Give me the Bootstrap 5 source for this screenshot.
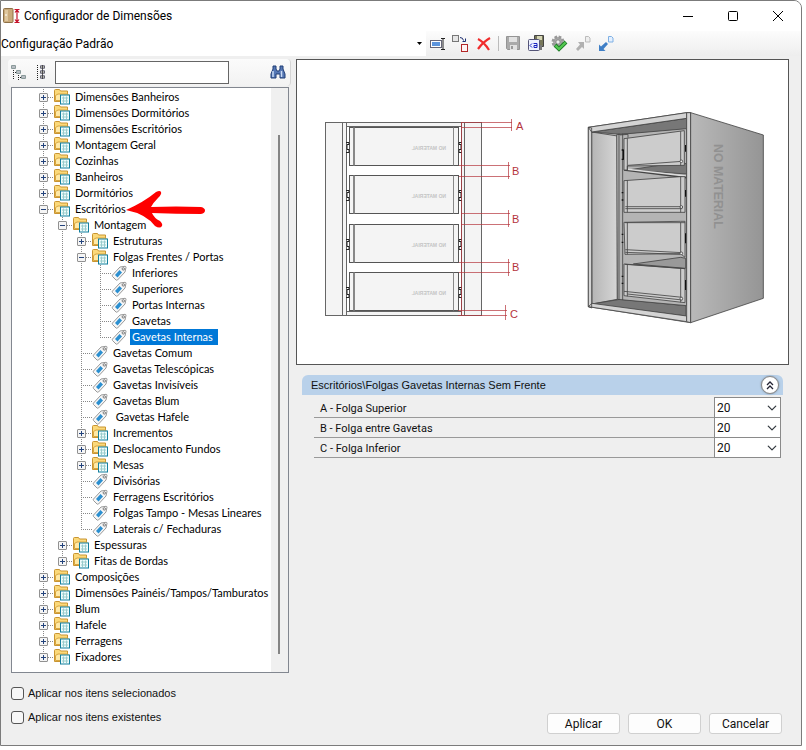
<!DOCTYPE html>
<html lang="pt-BR">
<head>
<meta charset="utf-8">
<meta name="viewport" content="width=device-width, initial-scale=1">
<title>Configurador de Dimensões</title>
<link href="https://cdn.jsdelivr.net/npm/bootstrap@5.3.0/dist/css/bootstrap.min.css" rel="stylesheet">
<style>
body{font:11px/16px "Liberation Sans",Arial,sans-serif;color:#111;background:#fff}
svg{display:block;flex:none}
button{color:inherit}
.window{min-height:calc(100vh - 4px);margin:0 4px 4px 0;border:1px solid #7b7b7b;border-top-right-radius:8px;background:#efefef;overflow:hidden}
.titlebar{height:30px;background:#fff;color:#000;font:12px/16px Roboto,sans-serif;padding:0 11px 0 2px}
.titlebar .controls{gap:20px}
.titlebar button{width:25px;height:24px}
.plain-btn{border:0;background:none;padding:0;display:flex;align-items:center;justify-content:center}
.commands{height:25px;background:#fff}
.profile{flex:0 0 425px;border:0;padding:0 14px 0 0;appearance:none;color:#000;font:12px/16px Roboto,sans-serif;background:#fff url("data:image/svg+xml,%3Csvg xmlns='http://www.w3.org/2000/svg' width='5' height='3'%3E%3Cpath d='M0 0h5L2.5 3z'/%3E%3C/svg%3E") no-repeat right 4px center}
.tools{background:linear-gradient(#fcfcfc,#eee);padding-left:3px;gap:6px}
.tools .plain-btn{width:17px;height:18px}
.sep{width:1px;height:15px;background:#bbb}
.content-area{padding-top:3px}
.side{width:283px;margin-left:7px}
.main-area{margin-left:5px;min-width:0}
.finder{height:27px;gap:9px;background:linear-gradient(#fbfbfb,#f2f2f2);border-right:1px solid #d5d5d5;border-radius:4px;padding:0 4px 0 3px}
.finder input{width:174px;height:23px;border:1px solid #666;background:#fff;padding:0 4px}
.treebox{height:586px;margin:1px 2px 0 3px;border:1px solid #828790;background:#fff;font-family:Lato,sans-serif;color:#000}
.tree{padding:1px 0 0 27px;min-width:0;flex:1;overflow:hidden}
.tree ul{list-style:none;margin:0;padding:0}
.tree ul ul{margin-left:19px}
.tree li{background:repeating-linear-gradient(#888 0 1px,transparent 1px 2px) 4px 0/1px 100% no-repeat}
.tree li:last-child{background-size:1px 8px}
.node{display:flex;align-items:center;height:16px;white-space:nowrap}
.node button{width:9px;height:9px;border:1px solid #919191;border-radius:1px;background:linear-gradient(#23437c,#23437c) center/5px 1px no-repeat,linear-gradient(#23437c,#23437c) center/1px 5px no-repeat,#f5f5f5;padding:0;flex:none}
.node button[aria-expanded=true]{background:linear-gradient(#23437c,#23437c) center/5px 1px no-repeat,#f5f5f5}
.node i{width:6px;height:1px;flex:none;background:repeating-linear-gradient(90deg,#888 0 1px,transparent 1px 2px)}
.node.leaf i{width:11px;margin-left:4px}
.node span{margin-left:3px;padding:0 5px 0 2px}
.tree .picked span{background:#0078d7;color:#fff}
.scroller{width:17px;flex:none;background:#f0f0f0;padding:47px 0 18px 7px}
.scroller div{width:2px;height:100%;background:#858585}
.pointer{position:absolute;left:113px;top:101px}
.preview{border:1px solid #555;background:#fff;margin-right:12px}
.preview svg{width:100%;height:auto}
.grouphead{height:20px;background:#b9d1ea;border-radius:6px 6px 0 0;margin:10px 18px 0 6px;padding:0 4px 0 9px}
.grouphead button{width:18px;height:18px;border:1px solid #888;border-radius:50%;background:#fff;box-shadow:0 0 2px #789}
.fields{margin:3px 20px 0 18px;font-family:Roboto,sans-serif}
.field{height:20px;border-bottom:1px solid #999}
.field label{padding:2px 0 0 6px}
.field select{width:67px;height:21px;margin:-1px 0;border:1px solid #8a8a8a;border-radius:0;font:12px/16px Roboto,sans-serif;color:#111;padding:0 16px 0 2px;background-position:right 3px center;background-size:10px 10px}
.options{padding:8px 0 0 3px}
.check{height:24px}
.check input{appearance:none;width:13px;height:13px;border:1px solid #555;border-radius:3px;background:#f7f7f7;margin:0 4px 0 0}
.actions{gap:8px;padding:0 19px 11px 0}
.actions .btn{width:73px;height:21px;padding:0;border:1px solid #d0d0d0;border-radius:3px;background:#fdfdfd;font:12px/16px Roboto,sans-serif;color:#111}
</style>
<script src="https://cdn.jsdelivr.net/npm/bootstrap@5.3.0/dist/js/bootstrap.bundle.min.js"></script>
</head>
<body>
<svg width="0" height="0" class="position-absolute" aria-hidden="true">
  <symbol id="folder" viewBox="0 0 16 16">
    <path d="M.5 12.500V1.500q0-1 1-1h4l1 1.500h7v10.500z" fill="#fbd97a" stroke="#c99531"/>
    <path d="M1.500 11.500V6.500L4 5h10v6.500z" fill="#ffe9a6" stroke="#d8a640"/>
    <rect x="6.500" y="6" width="9" height="9" fill="#eefbfb" stroke="#15809f"/>
    <path d="M8 9h6M8 12h6M9.500 7.500V14M12.500 7.500V14" stroke="#9cc" fill="none"/>
  </symbol>
  <symbol id="tag" viewBox="0 0 16 16">
    <path d="M1.500 10 9 2l5-.7q1 0 1 1L14 7l-7.500 8q-.8.500-1.500 0L1.500 11.500q-.6-.7 0-1.500z" fill="#f6f6f6" stroke="#999"/>
    <path d="M4 10 8.500 5 11 7.500 6.500 12.500z" fill="#2b8fd0"/>
    <circle cx="12.300" cy="3.900" r="1.200" fill="#fff" stroke="#777"/>
  </symbol>
</svg>

<main class="window d-flex flex-column">
  <header class="titlebar d-flex align-items-center">
    <svg width="17" height="16" viewBox="0 0 17 16"><rect x=".5" y=".5" width="9.500" height="14" rx="1" fill="#c9aa7b" stroke="#8e7047"/><path d="M2 2h3v11H2z" fill="#dfc79e"/><path d="M3 6v2" stroke="#fff"/><path d="M11.500 1.500h5M11.500 14.500h5M14 2v12M12 4.500l2-2.500 2 2.500M12 11.500l2 2.500 2-2.500" fill="none" stroke="#c4142c" stroke-width="1.200"/></svg>
    <span class="ms-1">Configurador de Dimensões</span>
    <div class="controls d-flex ms-auto">
      <button class="plain-btn" aria-label="Minimizar"><svg width="10" height="10"><path d="M0 5.500h10" stroke="#000"/></svg></button>
      <button class="plain-btn" aria-label="Maximizar"><svg width="10" height="10"><rect x=".5" y=".5" width="9" height="9" rx="1" fill="none" stroke="#000"/></svg></button>
      <button class="plain-btn" aria-label="Fechar"><svg width="10" height="10"><path d="m0 0 10 10M10 0 0 10" stroke="#000"/></svg></button>
    </div>
  </header>

  <div class="commands d-flex">
    <select class="profile" aria-label="Configuração"><option>Configuração Padrão</option></select>
    <div class="tools d-flex align-items-center flex-fill">
      <button class="plain-btn" aria-label="Renomear"><svg width="16" height="14"><rect x=".5" y="3.500" width="11" height="7" fill="#fff" stroke="#667"/><path d="M2 5h8v4H2z" fill="#5c94dc"/><path d="M11 1.500h4M11 12.500h4M13 2v10" stroke="#222" fill="none"/></svg></button>
      <button class="plain-btn" aria-label="Copiar"><svg width="17" height="17"><rect x=".5" y=".5" width="6" height="6" fill="#e5e5e5" stroke="#777"/><rect x="9.500" y="9.500" width="6" height="7" fill="#fff3f3" stroke="#b32626"/><path d="M8 2.500q3 0 3.500 3M13.500 3.500v3h-3" stroke="#1b2c70" fill="none"/></svg></button>
      <button class="plain-btn" aria-label="Excluir"><svg width="14" height="14"><path d="M1 2q6 3 11 11M13 1Q6 5 1 12" fill="none" stroke="#f02c2c" stroke-width="2.200"/></svg></button>
      <span class="sep"></span>
      <button class="plain-btn" aria-label="Salvar"><svg width="15" height="15"><path d="M.5.5h13v13h-12l-1-1z" fill="#aaa" stroke="#949494"/><path d="M3 1h8v5H3zM4 9h7v5H4z" fill="#e2e2e2"/><path d="M5 10h2v3H5z" fill="#999"/></svg></button>
      <button class="plain-btn" aria-label="Salvar como"><svg width="17" height="17"><path d="M6.500.5h9v11h-9z" fill="#77775a" stroke="#444"/><path d="M9 1h5v4H9z" fill="#d5d5b4"/><path d="M11 10h3v5h-3z" fill="#777"/><rect x=".5" y="4.500" width="11" height="11" rx="1" fill="#eef2ff" stroke="#557"/><path d="M4 8.500 2 10.500l2 2M5.500 8.500H9v4H6v-2h3" fill="none" stroke="#1822c0"/></svg></button>
      <button class="plain-btn" aria-label="Validar"><svg width="17" height="17"><circle cx="7" cy="7" r="5" fill="#aaa" stroke="#999" stroke-width="3" stroke-dasharray="2.500 1.430"/><circle cx="7" cy="7" r="2.200" fill="#eee" stroke="#888"/><path d="m4 10 4 4 7-7" fill="none" stroke="#217d2a" stroke-width="4"/><path d="m4.500 10.500 3.500 3.500 6.500-6.500" fill="none" stroke="#54ca51" stroke-width="2.200"/></svg></button>
      <button class="plain-btn" aria-label="Exportar"><svg width="16" height="16"><path d="m1 13 2 2 4-4 2 2V6H3l2 2.500z" fill="#b0b0b0"/><path d="M10.500.5h3l1.500 1.500v4h-4.500z" fill="#eee" stroke="#bbb"/></svg></button>
      <button class="plain-btn" aria-label="Importar"><svg width="16" height="16"><path d="M1 8.500V15h6.500l-2-2L10 8 8 6l-5 4.500z" fill="#3f7fc6"/><path d="M10.500.5h3l1.500 1.500v4h-4.500z" fill="#e4f0ff" stroke="#7fb0e4"/></svg></button>
    </div>
  </div>

  <div class="content-area d-flex flex-fill">
    <section class="side d-flex flex-column flex-shrink-0">
      <div class="finder d-flex align-items-center">
        <button class="plain-btn" aria-label="Recolher tudo"><svg width="16" height="16"><path d="M2.500 5v10M7.500 10v5M4 7.500h2M9 12.500h1" stroke="#222" stroke-dasharray="1 1"/><path d="M.5.5h4v3h-4zM5.500 5.500h4v3h-4zM10.500 10.500h4v3h-4z" fill="#fff" stroke="#8a9a9a"/><path d="M1 2h3M6 7h3M11 12h3" stroke="#345" stroke-width=".7"/></svg></button>
        <button class="plain-btn" aria-label="Expandir tudo"><svg width="10" height="16"><path d="M1.500 0v16" stroke="#222" stroke-dasharray="1 1"/><path d="M4.500.5h4v3h-4zM4.500 5.500h4v3h-4zM4.500 10.500h4v3h-4z" fill="#fff" stroke="#889"/><path d="M4 2h5M4 7h5M4 12h5M6.500 0v14" stroke="#333" stroke-width=".8"/></svg></button>
        <input type="text" aria-label="Pesquisar">
        <button class="plain-btn ms-auto" aria-label="Localizar"><svg width="16" height="15"><path d="M3 1h3v3l1 2h2l1-2V1h3v3l2 5v4h-5V9H6v4H1V9l2-5z" fill="#5577b4" stroke="#213e77"/><path d="M3 6v6M11.500 6v6" stroke="#c9dbf6" stroke-width="1.500"/></svg></button>
      </div>
      <div class="treebox d-flex position-relative">
        <div class="tree">
          <ul>
            <li><div class="node"><button aria-label="Expandir"></button><i></i><svg width="16" height="16"><use href="#folder"/></svg><span>Dimensões Banheiros</span></div></li>
            <li><div class="node"><button aria-label="Expandir"></button><i></i><svg width="16" height="16"><use href="#folder"/></svg><span>Dimensões Dormitórios</span></div></li>
            <li><div class="node"><button aria-label="Expandir"></button><i></i><svg width="16" height="16"><use href="#folder"/></svg><span>Dimensões Escritórios</span></div></li>
            <li><div class="node"><button aria-label="Expandir"></button><i></i><svg width="16" height="16"><use href="#folder"/></svg><span>Montagem Geral</span></div></li>
            <li><div class="node"><button aria-label="Expandir"></button><i></i><svg width="16" height="16"><use href="#folder"/></svg><span>Cozinhas</span></div></li>
            <li><div class="node"><button aria-label="Expandir"></button><i></i><svg width="16" height="16"><use href="#folder"/></svg><span>Banheiros</span></div></li>
            <li><div class="node"><button aria-label="Expandir"></button><i></i><svg width="16" height="16"><use href="#folder"/></svg><span>Dormitórios</span></div></li>
            <li><div class="node"><button aria-label="Recolher" aria-expanded="true"></button><i></i><svg width="16" height="16"><use href="#folder"/></svg><span>Escritórios</span></div>
              <ul>
                <li><div class="node"><button aria-label="Recolher" aria-expanded="true"></button><i></i><svg width="16" height="16"><use href="#folder"/></svg><span>Montagem</span></div>
                  <ul>
                    <li><div class="node"><button aria-label="Expandir"></button><i></i><svg width="16" height="16"><use href="#folder"/></svg><span>Estruturas</span></div></li>
                    <li><div class="node"><button aria-label="Recolher" aria-expanded="true"></button><i></i><svg width="16" height="16"><use href="#folder"/></svg><span>Folgas Frentes / Portas</span></div>
                      <ul>
                        <li><div class="node leaf"><i></i><svg width="16" height="16"><use href="#tag"/></svg><span>Inferiores</span></div></li>
                        <li><div class="node leaf"><i></i><svg width="16" height="16"><use href="#tag"/></svg><span>Superiores</span></div></li>
                        <li><div class="node leaf"><i></i><svg width="16" height="16"><use href="#tag"/></svg><span>Portas Internas</span></div></li>
                        <li><div class="node leaf"><i></i><svg width="16" height="16"><use href="#tag"/></svg><span>Gavetas</span></div></li>
                        <li><div class="node leaf picked"><i></i><svg width="16" height="16"><use href="#tag"/></svg><span>Gavetas Internas</span></div></li>
                      </ul>
                    </li>
                    <li><div class="node leaf"><i></i><svg width="16" height="16"><use href="#tag"/></svg><span>Gavetas Comum</span></div></li>
                    <li><div class="node leaf"><i></i><svg width="16" height="16"><use href="#tag"/></svg><span>Gavetas Telescópicas</span></div></li>
                    <li><div class="node leaf"><i></i><svg width="16" height="16"><use href="#tag"/></svg><span>Gavetas Invisíveis</span></div></li>
                    <li><div class="node leaf"><i></i><svg width="16" height="16"><use href="#tag"/></svg><span>Gavetas Blum</span></div></li>
                    <li><div class="node leaf"><i></i><svg width="16" height="16"><use href="#tag"/></svg><span>&nbsp;Gavetas Hafele</span></div></li>
                    <li><div class="node"><button aria-label="Expandir"></button><i></i><svg width="16" height="16"><use href="#folder"/></svg><span>Incrementos</span></div></li>
                    <li><div class="node"><button aria-label="Expandir"></button><i></i><svg width="16" height="16"><use href="#folder"/></svg><span>Deslocamento Fundos</span></div></li>
                    <li><div class="node"><button aria-label="Expandir"></button><i></i><svg width="16" height="16"><use href="#folder"/></svg><span>Mesas</span></div></li>
                    <li><div class="node leaf"><i></i><svg width="16" height="16"><use href="#tag"/></svg><span>Divisórias</span></div></li>
                    <li><div class="node leaf"><i></i><svg width="16" height="16"><use href="#tag"/></svg><span>Ferragens Escritórios</span></div></li>
                    <li><div class="node leaf"><i></i><svg width="16" height="16"><use href="#tag"/></svg><span>Folgas Tampo - Mesas Lineares</span></div></li>
                    <li><div class="node leaf"><i></i><svg width="16" height="16"><use href="#tag"/></svg><span>Laterais c/ Fechaduras</span></div></li>
                  </ul>
                </li>
                <li><div class="node"><button aria-label="Expandir"></button><i></i><svg width="16" height="16"><use href="#folder"/></svg><span>Espessuras</span></div></li>
                <li><div class="node"><button aria-label="Expandir"></button><i></i><svg width="16" height="16"><use href="#folder"/></svg><span>Fitas de Bordas</span></div></li>
              </ul>
            </li>
            <li><div class="node"><button aria-label="Expandir"></button><i></i><svg width="16" height="16"><use href="#folder"/></svg><span>Composições</span></div></li>
            <li><div class="node"><button aria-label="Expandir"></button><i></i><svg width="16" height="16"><use href="#folder"/></svg><span>Dimensões Painéis/Tampos/Tamburatos</span></div></li>
            <li><div class="node"><button aria-label="Expandir"></button><i></i><svg width="16" height="16"><use href="#folder"/></svg><span>Blum</span></div></li>
            <li><div class="node"><button aria-label="Expandir"></button><i></i><svg width="16" height="16"><use href="#folder"/></svg><span>Hafele</span></div></li>
            <li><div class="node"><button aria-label="Expandir"></button><i></i><svg width="16" height="16"><use href="#folder"/></svg><span>Ferragens</span></div></li>
            <li><div class="node"><button aria-label="Expandir"></button><i></i><svg width="16" height="16"><use href="#folder"/></svg><span>Fixadores</span></div></li>
          </ul>
        </div>
        <div class="scroller"><div></div></div>
        <svg class="pointer" width="82" height="40" viewBox="0 0 82 40"><path d="M1 21Q19 13 31 3q4-2 5 0 1 2-3 6-5 5-7 9 25-1 50 0 4 1 4 3.500T76 25q-25 0-49-1 2 5 8 8 3 3 2 5-2 3-7 0Q21 25 1 21z" fill="#fe0000"/></svg>
      </div>
      <div class="options">
        <div class="check d-flex align-items-center"><input type="checkbox" id="sel"><label for="sel">Aplicar nos itens selecionados</label></div>
        <div class="check d-flex align-items-center"><input type="checkbox" id="exi"><label for="exi">Aplicar nos itens existentes</label></div>
      </div>
    </section>

    <section class="main-area d-flex flex-column flex-fill">
      <div class="preview">
        <svg viewBox="297 60 491 304" role="img" aria-label="Vista frontal e perspectiva do gaveteiro">
          <defs>
            <linearGradient id="sideShade"><stop stop-color="#b9b9b9"/><stop offset="1" stop-color="#959595"/></linearGradient>
            <linearGradient id="wallShade"><stop stop-color="#b5b5b5"/><stop offset="1" stop-color="#d6d6d6"/></linearGradient>
            <g id="drawer"><rect x="349.500" y="0" width="109" height="38" fill="#f4f4f4" stroke="#555"/><path d="M353.500 0v38M354.500 0v38M453.500 0v38" stroke="#888"/><path d="M346 15h3v2h-2v5h2v3h-3M462 15h-3v2h2v5h-2v3h3" fill="none" stroke="#222"/><text transform="translate(446 22) scale(-1 1)" font-size="5" font-weight="bold" fill="#c4c4c4" font-family="Liberation Sans">NO MATERIAL</text></g>
          </defs>
          <g fill="#f4f4f4" stroke="#666">
            <rect x="325.500" y="122.500" width="17" height="193"/><rect x="342.500" y="122.500" width="4" height="193"/>
            <rect x="464.500" y="122.500" width="17" height="193"/><rect x="461.500" y="122.500" width="3" height="193"/>
            <rect x="346.500" y="122.500" width="115" height="4"/><rect x="346.500" y="311.500" width="115" height="4"/>
          </g>
          <use href="#drawer" y="127.500"/><use href="#drawer" y="175.500"/><use href="#drawer" y="224.500"/><use href="#drawer" y="272.500"/>
          <path d="M461 122.500h51M461 127.500h51M511.500 119v12M459 165.500h51M459 176.500h51M508.500 162v17M461 213.500h49M461 224.500h49M508.500 210v17M459 262.500h51M459 272.500h51M508.500 259v17M458 310.500h49M458 315.500h49M505.500 305v15M461.500 122v193" fill="none" stroke="#b5343c" stroke-opacity=".7"/>
          <g font-family="Liberation Sans" font-size="11" fill="#b5343c"><text x="516" y="130">A</text><text x="512" y="175">B</text><text x="512" y="223">B</text><text x="512" y="271">B</text><text x="510" y="318">C</text></g>
          <g transform="translate(570 100) scale(.33333)" stroke="#444" stroke-width="2.500" stroke-linejoin="round">
            <path d="M55 82 350 38 362 38V668L55 620z" fill="#bcbcbc"/>
            <path d="M65 96 142 108V598L66 612z" fill="url(#wallShade)"/>
            <path d="M65 96 350 55V90L155 103z" fill="#777"/>
            <path d="M66 612 150 598 348 617V648z" fill="#777"/>
            <path d="M140 104 350 86V617L142 598z" fill="#b4b4b4"/>
            <path d="M147 101v499M158 101v499" fill="none"/>
            <path d="M55 82 65 84V624L55 620zM55 82 350 38V55L65 96zM55 620 66 610 350 648V665z" fill="#d4d4d4"/>
            <path d="M174 210 335 186 350 192V222z" fill="#777"/>
            <path d="M162 209 350 232" stroke-width="7"/><path d="M165 207 347 228" stroke="#ddd" stroke-width="4"/>
            <path d="M162 116 343 92V196L172 198V210H162z" fill="#ccc"/>
            <path d="M172 115v95M332 94v102M174 196 336 184M150 105l24-2v10" fill="none"/>
            <path d="M162 242 332 230H345V337H162z" fill="#ccc"/>
            <path d="M172 241v96M332 230v107M166 320 337 320M166 326h171" fill="none"/>
            <path d="M162 367 332 364H345V472L332 461 165 463z" fill="#ccc"/>
            <path d="M172 367v96M332 367v94M166 449 336 458M166 457 330 463M165 368h180" fill="none"/>
            <path d="M190 492 332 472 347 475V505z" fill="#999"/>
            <path d="M162 492 345 506V608L162 587z" fill="#ccc"/>
            <path d="M172 493v96M332 505v102M162 574 337 592M172 582 337 600M165 493 345 506" fill="none"/>
            <path d="M155 150h5v28h-5M155 278h5M155 300h5M155 403h5M155 427h5M155 529h5M155 550h5M347 135v20M347 270v20M347 400v30M347 540v30" fill="none" stroke="#111" stroke-width="4"/>
            <g fill="#eee"><circle cx="334" cy="184" r="4"/><circle cx="334" cy="321" r="4"/><circle cx="334" cy="460" r="4"/><circle cx="334" cy="596" r="4"/></g>
            <path d="M350 38 362 38V668L350 665z" fill="#d4d4d4"/>
            <path d="M362 38 580 105V595L362 668z" fill="url(#sideShade)"/>
            <text transform="translate(432 132) rotate(90)" font-size="37" font-family="Liberation Sans" font-weight="bold" fill="#919191" stroke="none">NO MATERIAL</text>
          </g>
        </svg>
      </div>
      <div class="grouphead d-flex align-items-center justify-content-between"><span>Escritórios\Folgas Gavetas Internas Sem Frente</span><button class="plain-btn" aria-label="Recolher grupo"><svg width="8" height="9"><path d="m1 4 3-3 3 3M1 8l3-3 3 3" fill="none" stroke="#223" stroke-width="1.300"/></svg></button></div>
      <div class="fields">
        <div class="field d-flex align-items-center justify-content-between"><label for="fa">A - Folga Superior</label><select class="form-select" id="fa"><option>20</option></select></div>
        <div class="field d-flex align-items-center justify-content-between"><label for="fb">B - Folga entre Gavetas</label><select class="form-select" id="fb"><option>20</option></select></div>
        <div class="field d-flex align-items-center justify-content-between"><label for="fc">C - Folga Inferior</label><select class="form-select" id="fc"><option>20</option></select></div>
      </div>
      <div class="actions d-flex justify-content-end mt-auto"><button class="btn">Aplicar</button><button class="btn">OK</button><button class="btn">Cancelar</button></div>
    </section>
  </div>
</main>
</body>
</html>
